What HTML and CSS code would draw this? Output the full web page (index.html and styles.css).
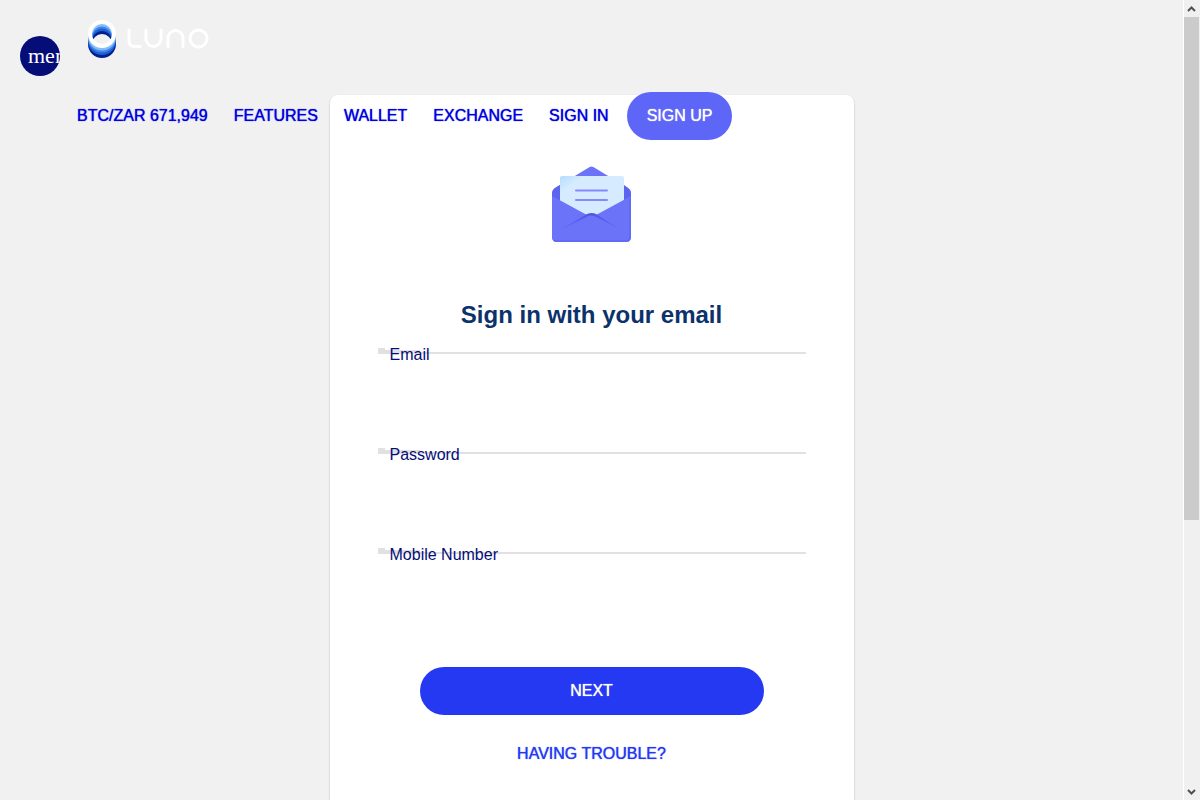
FILE: index.html
```html
<!DOCTYPE html>
<html lang="en">
<head>
<meta charset="utf-8">
<meta name="viewport" content="width=device-width, initial-scale=1">
<title>Luno - Sign in</title>
<link rel="stylesheet" href="styles.css">
</head>
<body>
<div class="page">
  <header class="header">
    <div class="brand">
      <button class="menu" type="button">menu</button>
      <a class="logo" href="#" aria-label="Luno">
        <svg width="121" height="38" viewBox="0 0 121 38" fill="none">
          <g stroke-width="4">
            <circle cx="14" cy="24" r="12" stroke="#00208f"/>
            <circle cx="14" cy="21" r="12" stroke="#1f5fd4"/>
            <circle cx="14" cy="18.500" r="12" stroke="#3f86ea"/>
            <circle cx="14" cy="16.500" r="12" stroke="#86bcf8"/>
            <circle cx="14" cy="14" r="12" stroke="#fff"/>
          </g>
          <g stroke="#fff" stroke-width="3" stroke-linecap="round">
            <path d="M41 10v11q0 5.500 5.500 5.500H52M58 10v9a7.500 7.500 0 0 0 15 0v-9M80 26.500V18a7.500 7.500 0 0 1 15 0v8.500"/>
            <circle cx="110.500" cy="18.500" r="8.500"/>
          </g>
        </svg>
      </a>
    </div>
    <nav class="nav">
      <a href="#">BTC/ZAR 671,949</a>
      <a href="#">FEATURES</a>
      <a href="#">WALLET</a>
      <a href="#">EXCHANGE</a>
      <a href="#">SIGN IN</a>
      <a class="signup" href="#">SIGN UP</a>
    </nav>
  </header>
  <main class="card">
    <svg class="envelope" width="80" height="78" viewBox="0 0 80 78">
      <defs>
        <linearGradient id="paper" x1="0" y1="0" x2="1" y2="1">
          <stop offset="0" stop-color="#b2dcff"/><stop offset=".2" stop-color="#d6ebff"/>
        </linearGradient>
        <linearGradient id="fold" x1="0" y1="0" x2="0" y2="1">
          <stop offset="0" stop-color="#4f54e6"/><stop offset="1" stop-color="#6b74f8"/>
        </linearGradient>
      </defs>
      <path d="M0 28q0-4 3-6L36 2q3.500-3 7 0l33 20q3 2 3 6v43q0 5-5 5H5q-5 0-5-5Z" fill="#6b74f8"/>
      <path d="M0 28q0-4 3-6l5-3v16L0 31ZM79 28q0-4-3-6l-4-3v16l7-4Z" fill="#5c63ee"/>
      <path d="M8 12q0-2 2-2h60q2 0 2 2v25L40 52 8 37Z" fill="url(#paper)"/>
      <path d="M24 24.500h31M24 34h31" stroke="#8589fb" stroke-width="2" stroke-linecap="round"/>
      <path d="M0 30l35 19q4-2 9 0l35-19v41q0 5-5 5H5q-5 0-5-5Z" fill="#6b74f8"/>
      <path d="M35 48L4 66l29-14q6-5 13 0l25 13-27-17q-4-2-9 0Z" fill="url(#fold)"/>
      <path d="M2 74q1 1 4 1h67q5 0 5-5V32" fill="none" stroke="#5b62ed"/>
    </svg>
    <h1 class="title">Sign in with your email</h1>
    <form class="form">
      <div class="field">
        <label for="email">Email</label>
        <div class="outline"><i class="corner"></i><i class="notch"></i><i class="line"></i></div>
        <input id="email" type="email">
      </div>
      <div class="field">
        <label for="password">Password</label>
        <div class="outline"><i class="corner"></i><i class="notch"></i><i class="line"></i></div>
        <input id="password" type="password">
      </div>
      <div class="field">
        <label for="mobile">Mobile Number</label>
        <div class="outline"><i class="corner"></i><i class="notch"></i><i class="line"></i></div>
        <input id="mobile" type="tel">
      </div>
      <button class="next" type="submit">NEXT</button>
    </form>
    <a class="trouble" href="#">HAVING TROUBLE?</a>
  </main>
</div>
<div class="scrollbar" aria-hidden="true">
  <svg width="15" height="17" viewBox="0 0 15 17"><path d="M4 11l3.500-3.500L11 11" fill="none" stroke="#505050" stroke-width="2"/></svg>
  <div class="track"><div class="thumb"></div></div>
  <svg width="15" height="17" viewBox="0 0 15 17"><path d="M4 7l3.500 3.500L11 7" fill="none" stroke="#505050" stroke-width="2"/></svg>
</div>
</body>
</html>
```
FILE: styles.css
```css
* { box-sizing: border-box; }

body {
  margin: 0;
  display: flex;
  height: 100vh;
  overflow: hidden;
  background: #f1f1f1;
  font: 500 16px/24px "Liberation Sans", Arial, sans-serif;
}

a { text-decoration: none; }

.page {
  position: relative;
  flex: 1;
  display: flex;
  justify-content: center;
  align-items: flex-start;
  padding-top: 95px;
}

.header {
  position: absolute;
  top: 0;
  left: 0;
  right: 0;
  padding: 20px 20px 0;
}

.brand {
  display: flex;
  gap: 28px;
  height: 72px;
}

.menu {
  width: 40px;
  height: 40px;
  margin-top: 16px;
  padding: 0 0 0 8px;
  border: 0;
  border-radius: 50%;
  overflow: hidden;
  background: #040d78;
  color: #fff;
  font: 22px/40px "Liberation Serif", serif;
  text-align: left;
}

.logo svg { display: block; }

.nav {
  display: flex;
  align-items: center;
  gap: 26px;
  padding-left: 57px;
  white-space: nowrap;
}

.nav a { color: #0000e0; }

.nav a,
.next,
.trouble {
  text-shadow: 0 0 1px currentColor;
}

.nav .signup {
  margin-left: -8px;
  padding: 12px 20px;
  border-radius: 24px;
  background: #5d66f7;
  color: #fff;
}

.card {
  display: flex;
  flex-direction: column;
  align-items: center;
  width: 524px;
  padding: 71px 48px 48px;
  border-radius: 8px;
  background: #fff;
  box-shadow: 0 1px 2px rgba(0, 0, 0, 0.25);
}

.title {
  margin: 55px 0 17px;
  color: #0c326c;
  font-size: 24px;
  font-weight: 600;
  line-height: 32px;
}

.form {
  display: flex;
  flex-direction: column;
  width: 100%;
}

.field {
  position: relative;
  height: 100px;
}

.field label {
  position: absolute;
  top: -5px;
  left: 12px;
  color: #040d78;
  font-weight: 300;
}

.outline {
  display: flex;
  align-items: flex-end;
}

.outline i { background: #e1e1e1; }
.corner { width: 7px; height: 6px; }
.notch { width: 35px; height: 4px; }
.line { flex: 1; height: 2px; }

.field input {
  width: 100%;
  height: 48px;
  padding: 0 12px;
  border: 0;
  outline: 0;
  background: transparent;
  font: inherit;
}

.next {
  height: 48px;
  margin: 19px 42px 27px;
  border: 0;
  border-radius: 24px;
  background: #2539f3;
  color: #fff;
  font: inherit;
}

.trouble { color: #2539f3; }

.scrollbar {
  display: flex;
  flex-direction: column;
  width: 17px;
  border-left: 1px solid #fff;
  background: #f0f0f0;
}

.scrollbar svg { display: block; }
.track { flex: 1; padding-right: 1px; }
.thumb { height: 65.7%; background: #cbcbcb; }
```
